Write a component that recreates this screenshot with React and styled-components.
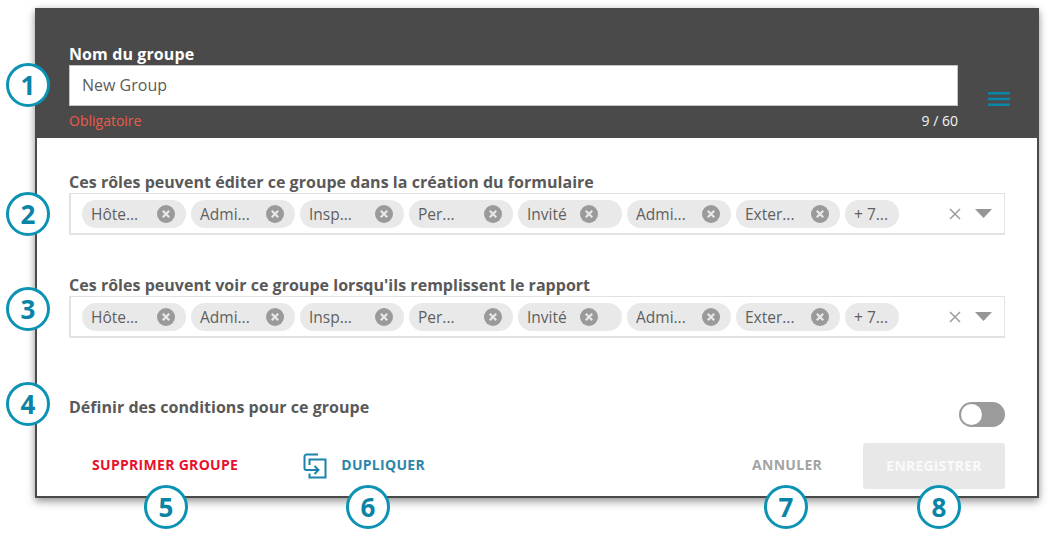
import React from "react";
import styled, { createGlobalStyle } from "styled-components";

const Global = createGlobalStyle`
  html, body { margin: 0; padding: 0; background: #fff; }
  body { font-family: "Open Sans", "Liberation Sans", sans-serif; }
`;

const Page = styled.div`
  position: relative;
  width: 1048px;
  height: 534px;
  overflow: hidden;
  padding: 8px 0 0 35px;
  box-sizing: border-box;
`;

const Dialog = styled.div`
  width: 1004px;
  height: 490px;
  box-sizing: border-box;
  border: 2px solid #4a4a4a;
  border-top-width: 1px;
  background: #fff;
  display: flex;
  flex-direction: column;
  box-shadow: 0 4px 8px rgba(0, 0, 0, 0.35), 0 0 6px rgba(0, 0, 0, 0.12);
`;

const Header = styled.div`
  height: 129px;
  flex: none;
  box-sizing: border-box;
  background: #4a4a4a;
  padding: 35px 29px 0 32px;
  display: flex;
  align-items: flex-start;
  gap: 30px;
`;

const NameField = styled.div`
  width: 889px;
  flex: none;
  display: flex;
  flex-direction: column;
`;

const NameLabel = styled.label`
  color: #fff;
  font-size: 16px;
  font-weight: 700;
  letter-spacing: 0.1px;
  line-height: 20px;
  height: 21px;
`;

const NameInput = styled.div`
  height: 41px;
  box-sizing: border-box;
  background: #fff;
  border: 1px solid #c4c4c4;
  padding: 0 12px;
  font-size: 16px;
  line-height: 38px;
  color: #5c5c5c;
`;

const Hint = styled.div`
  display: flex;
  justify-content: space-between;
  margin-top: 5px;
  font-size: 14px;
  line-height: 19px;
`;

const Required = styled.span`
  color: #ee5a4a;
`;

const Count = styled.span`
  color: #f5f5f5;
`;

const Menu = styled.svg`
  width: 22px;
  height: 14px;
  margin-top: 48px;
  flex: none;
`;

const Body = styled.div`
  flex: 1;
  display: flex;
  flex-direction: column;
  padding: 34px 32px 0;
  min-height: 0;
`;

const Section = styled.section`
  width: 936px;
  margin-bottom: ${(p) => p.$gap}px;
`;

const FieldLabel = styled.div`
  font-size: 16px;
  font-weight: 700;
  letter-spacing: 0.03px;
  line-height: 20px;
  height: 21px;
  color: #595959;
  white-space: nowrap;
`;

const Select = styled.div`
  height: 42px;
  box-sizing: border-box;
  border: 2px solid #e2e2e2;
  border-width: 1px 1px 2px 2px;
  display: flex;
  align-items: center;
  padding: 0 0 0 11px;
  gap: 5px;
`;

const Chip = styled.div`
  width: ${(p) => (p.$short ? 54 : 104)}px;
  height: 28px;
  flex: none;
  box-sizing: border-box;
  border-radius: 14px;
  background: #e9e9e9;
  padding: 0 11px 0 9px;
  display: flex;
  align-items: center;
  justify-content: space-between;
  font-size: 15.5px;
  color: #5f5f5f;
`;

const ChipClose = styled.svg`
  width: 18px;
  height: 18px;
  flex: none;
  margin-right: ${(p) => p.$inset}px;
`;

const SelectTools = styled.div`
  margin-left: auto;
  display: flex;
  align-items: center;
  gap: 14px;
  padding-right: 12px;
`;

const ToggleRow = styled.div`
  width: 936px;
  height: 40px;
  display: flex;
  justify-content: space-between;
  font-size: 16px;
  font-weight: 700;
  letter-spacing: 0.03px;
  line-height: 20px;
  color: #595959;
`;

const Switch = styled.div`
  width: 46px;
  height: 25px;
  margin-top: 5px;
  border-radius: 13px;
  background: #9b9b9b;
  box-sizing: border-box;
  padding: 2px;
`;

const Knob = styled.div`
  width: 21px;
  height: 21px;
  border-radius: 50%;
  background: #fff;
`;

const Footer = styled.div`
  width: 936px;
  height: 46px;
  margin-top: 6px;
  display: flex;
  align-items: center;
`;

const TextAction = styled.div`
  font-size: 14px;
  font-weight: 700;
  letter-spacing: 0.3px;
  line-height: 18px;
  margin-top: -2px;
  color: ${(p) => p.$color};
  margin-left: ${(p) => p.$left}px;
  white-space: nowrap;
`;

const DuplicateIcon = styled.svg`
  width: 24px;
  height: 26px;
  flex: none;
  margin-left: 65px;
`;

const SaveButton = styled.div`
  width: 142px;
  height: 46px;
  margin-left: 41px;
  padding-bottom: 2px;
  box-sizing: border-box;
  border-radius: 3px;
  background: #e8e8e8;
  color: #fafafa;
  font-size: 14px;
  font-weight: 700;
  letter-spacing: 0.2px;
  display: flex;
  align-items: center;
  justify-content: center;
`;

const Callout = styled.div`
  position: absolute;
  left: ${(p) => p.$x - 22}px;
  top: ${(p) => p.$y - 22}px;
  width: 44px;
  height: 44px;
  box-sizing: border-box;
  border: 3px solid #0c93b4;
  border-radius: 50%;
  background: #fff;
  color: #0a84a6;
  font-size: 26px;
  font-weight: 700;
  display: flex;
  align-items: center;
  justify-content: center;
`;

const CloseIcon = ({ inset = 0 }) => (
  <ChipClose $inset={inset} viewBox="0 0 18 18">
    <circle cx="9" cy="9" r="9" fill="#9a9a9a" />
    <path d="M5.8 5.8l6.4 6.4M12.2 5.8l-6.4 6.4" stroke="#e9e9e9" strokeWidth="2.2" strokeLinecap="butt" />
  </ChipClose>
);

const chips = [
  { t: "Hôte..." },
  { t: "Admi..." },
  { t: "Insp..." },
  { t: "Per..." },
  { t: "Invité", inset: 13 },
  { t: "Admi..." },
  { t: "Exter..." },
];

const RoleSelect = () => (
  <Select>
    {chips.map((c, i) => (
      <Chip key={i}>
        {c.t}
        <CloseIcon inset={c.inset || 0} />
      </Chip>
    ))}
    <Chip $short>+ 7...</Chip>
    <SelectTools>
      <svg width="12" height="12" viewBox="0 0 12 12">
        <path d="M1 1l10 10M11 1L1 11" stroke="#9c9c9c" strokeWidth="1.5" />
      </svg>
      <svg width="17" height="9" viewBox="0 0 17 9">
        <path d="M0 0h17l-8.5 9z" fill="#969696" />
      </svg>
    </SelectTools>
  </Select>
);

const marks = [
  [1, 28, 85], [2, 28, 214], [3, 28, 309], [4, 28, 404],
  [5, 166, 507], [6, 368, 507], [7, 786, 507], [8, 939, 507],
];

export default function App() {
  return (
    <Page>
      <Global />
      <Dialog>
        <Header>
          <NameField>
            <NameLabel>Nom du groupe</NameLabel>
            <NameInput>New Group</NameInput>
            <Hint>
              <Required>Obligatoire</Required>
              <Count>9 / 60</Count>
            </Hint>
          </NameField>
          <Menu viewBox="0 0 22 14">
            <path d="M0 1.2h22M0 7h22M0 12.8h22" stroke="#0a86aa" strokeWidth="2.4" />
          </Menu>
        </Header>
        <Body>
          <Section $gap={40}>
            <FieldLabel>Ces rôles peuvent éditer ce groupe dans la création du formulaire</FieldLabel>
            <RoleSelect />
          </Section>
          <Section $gap={59}>
            <FieldLabel>Ces rôles peuvent voir ce groupe lorsqu'ils remplissent le rapport</FieldLabel>
            <RoleSelect />
          </Section>
          <ToggleRow>
            <span>Définir des conditions pour ce groupe</span>
            <Switch><Knob /></Switch>
          </ToggleRow>
          <Footer>
            <TextAction $color="#e8112d" $left={23}>SUPPRIMER GROUPE</TextAction>
            <DuplicateIcon viewBox="0 0 24 26" fill="none" stroke="#1a84ab" strokeWidth="2">
              <path d="M15 1.5H3.5a2 2 0 0 0-2 2V15a2 2 0 0 0 2 2H15" />
              <path d="M6.5 12V6.5H22.5V24.5H6.5V20.5" />
              <path d="M11.5 13l4 4-4 4" />
            </DuplicateIcon>
            <TextAction $color="#2b86a8" $left={14}>DUPLIQUER</TextAction>
            <TextAction $color="#a3a3a3" $left={327}>ANNULER</TextAction>
            <SaveButton>ENREGISTRER</SaveButton>
          </Footer>
        </Body>
      </Dialog>
      {marks.map(([n, x, y]) => (
        <Callout key={n} $x={x} $y={y}>{n}</Callout>
      ))}
    </Page>
  );
}
